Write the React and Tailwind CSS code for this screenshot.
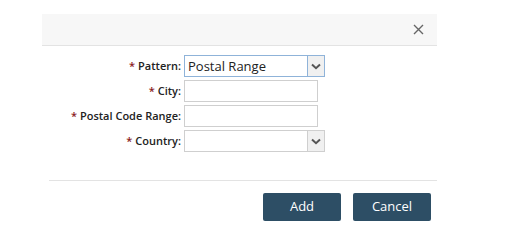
import React from "react";

const Chevron = () => (
  <svg width="10" height="7" viewBox="0 0 10 7" className="text-[#555]">
    <path d="M1 1.5 L5 5.2 L9 1.5" fill="none" stroke="currentColor" strokeWidth="2" />
  </svg>
);

const Label = ({ children }) => (
  <label className="text-right text-[11px] font-semibold text-[#222] leading-[22px] whitespace-nowrap">
    <span className="text-[#8b1c1c] mr-[3px]">*</span>
    {children}:
  </label>
);

const App = () => {
  return (
    <div className="w-[530px] h-[246px] bg-white font-['Open_Sans',sans-serif] pt-[14px]">
      <div className="ml-[42px] w-[395px]">
        {/* Header */}
        <div className="h-[32px] bg-[#f7f7f7] border-b border-[#e3e3e3] flex items-center justify-end pr-[13px]">
          <svg width="11" height="11" viewBox="0 0 11 11">
            <path d="M1 1 L10 10 M10 1 L1 10" stroke="#666" strokeWidth="1.4" />
          </svg>
        </div>

        {/* Form */}
        <div className="grid grid-cols-[139px_141px] gap-x-[3px] gap-y-[3px] mt-[9px]">
          <Label>Pattern</Label>
          <div className="flex h-[22px] border border-[#8fb3d9] bg-white">
            <div className="flex-1 text-[13px] text-[#222] leading-[20px] pl-[3px]">Postal Range</div>
            <div className="w-[17px] bg-[#f0f0f0] border-l border-[#8fb3d9] flex items-center justify-center">
              <Chevron />
            </div>
          </div>

          <Label>City</Label>
          <div className="w-[134px] h-[22px] border border-[#cfcfcf] bg-white" />

          <Label>Postal Code Range</Label>
          <div className="w-[134px] h-[22px] border border-[#cfcfcf] bg-white" />

          <Label>Country</Label>
          <div className="flex h-[22px] border border-[#cfcfcf] bg-white">
            <div className="flex-1" />
            <div className="w-[17px] bg-[#f0f0f0] border-l border-[#cfcfcf] flex items-center justify-center">
              <Chevron />
            </div>
          </div>
        </div>

        {/* Footer */}
        <div className="ml-[7px] mt-[28px] border-t border-[#e3e3e3] pt-[12px] flex justify-end gap-[12px] pr-[6px]">
          <button className="w-[78px] h-[28px] rounded-[2px] bg-[#2d4e65] text-white text-[13px]">Add</button>
          <button className="w-[78px] h-[28px] rounded-[2px] bg-[#2d4e65] text-white text-[13px]">Cancel</button>
        </div>
      </div>
    </div>
  );
};

export default App;
